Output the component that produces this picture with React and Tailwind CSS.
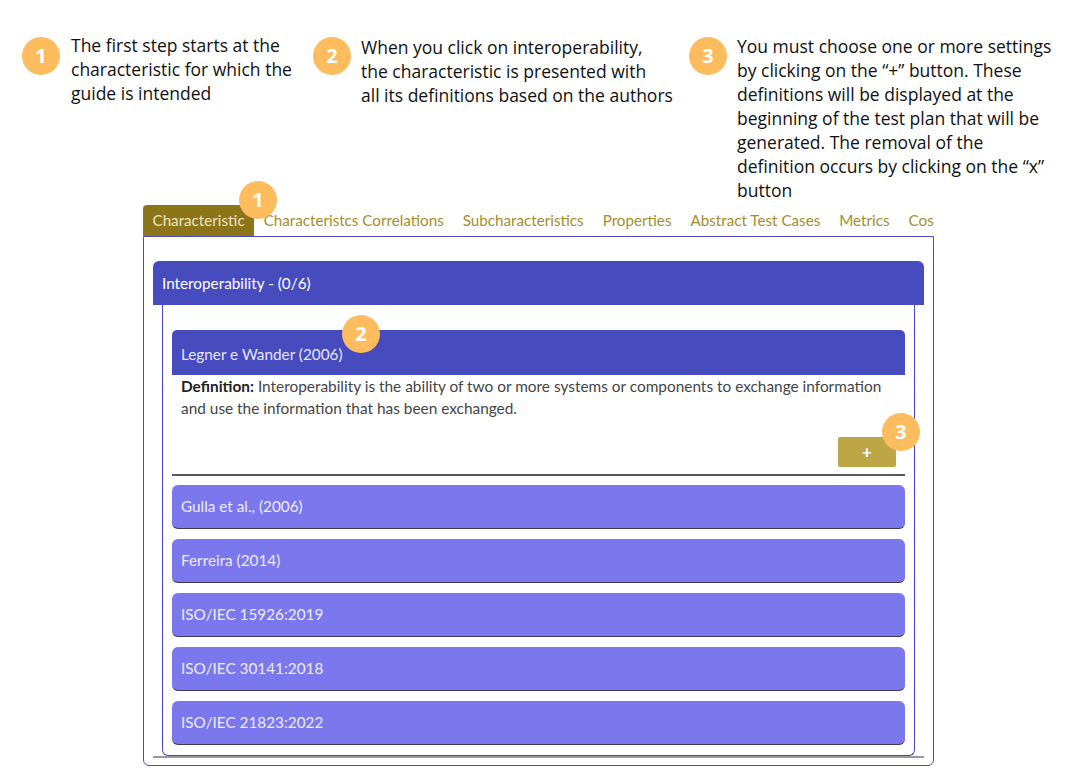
import React from 'react';

const UI_FONT = { fontFamily: 'Lato, "Open Sans", sans-serif' };
const NOTE_FONT = { fontFamily: '"Open Sans", "Noto Sans", sans-serif' };

// orange step marker used both in the notes and over the UI
function Badge({ n, className = '' }) {
  return (
    <div
      className={`w-[38px] h-[38px] rounded-full bg-[#fdbd5e] text-white text-[20px] font-bold flex items-center justify-center shrink-0 ${className}`}
      style={NOTE_FONT}
    >
      {n}
    </div>
  );
}

const tabs = [
  'Characteristic',
  'Characteristcs Correlations',
  'Subcharacteristics',
  'Properties',
  'Abstract Test Cases',
  'Metrics',
  'Cost',
];

const others = [
  'Gulla et al., (2006)',
  'Ferreira (2014)',
  'ISO/IEC 15926:2019',
  'ISO/IEC 30141:2018',
  'ISO/IEC 21823:2022',
];

function App() {
  return (
    <div className="bg-white w-[1081px] h-[770px] overflow-hidden relative">
      {/* explanatory notes */}
      <div className="flex items-start pt-[33px] text-[17.5px] leading-[24px] text-[#111]" style={NOTE_FONT}>
        <div className="flex items-start ml-[22px] w-[291px]">
          <Badge n="1" className="mt-[4px]" />
          <p className="ml-[11px]">
            The first step starts at the
            <br />
            characteristic for which the
            <br />
            guide is intended
          </p>
        </div>
        <div className="flex items-start w-[376px]">
          <Badge n="2" className="mt-[4px]" />
          <p className="ml-[10px] mt-[2px]">
            When you click on interoperability,
            <br />
            the characteristic is presented with
            <br />
            all its definitions based on the authors
          </p>
        </div>
        <div className="flex items-start">
          <Badge n="3" className="mt-[4px]" />
          <p className="ml-[10px] mt-[1px]">
            You must choose one or more settings
            <br />
            by clicking on the “+” button. These
            <br />
            definitions will be displayed at the
            <br />
            beginning of the test plan that will be
            <br />
            generated. The removal of the
            <br />
            definition occurs by clicking on the “x”
            <br />
            button
          </p>
        </div>
      </div>

      {/* screenshot of the tool */}
      <div className="ml-[143px] w-[791px] mt-[3px] relative" style={UI_FONT}>
        <div className="flex h-[31px] overflow-hidden whitespace-nowrap text-[15.2px]">
          {tabs.map((t, i) => (
            <div
              key={t}
              className={
                i === 0
                  ? 'px-[9.5px] flex items-center bg-[#8b7518] text-[#ece4c4] rounded-t-[4px]'
                  : 'px-[9.5px] flex items-center text-[#a58d2c]'
              }
            >
              {t}
            </div>
          ))}
        </div>
        <Badge n="1" className="absolute left-[96px] top-[-24px]" />

        <div className="border border-[#4d4dc6] rounded-b-[6px] px-[9px] pt-[24px] pb-[7px]">
          <div className="border-b-2 border-[#9a9a9a]">
            <div className="h-[44px] bg-[#464bbd] rounded-t-[6px] flex items-center px-[9px] text-white text-[15.3px]">
              Interoperability - (0/6)
            </div>
            <div className="mx-[9px] border-x border-b border-[#4646d0] rounded-b-[6px] px-[9px] pt-[25px] pb-[10px]">
              <div className="relative">
                <div className="h-[45px] bg-[#464bbd] rounded-t-[5px] flex items-center px-[9px] pt-[3px] text-[#e6e6ff] text-[15.3px]">
                  Legner e Wander (2006)
                </div>
                <Badge n="2" className="absolute left-[170px] top-[-15px]" />
                <p className="px-[9px] pr-[20px] text-[15.4px] leading-[22px] text-[#454545]">
                  <b className="text-[#222]">Definition:</b> Interoperability is the ability of two or more systems or
                  components to exchange information and use the information that has been exchanged.
                </p>
                <div className="flex justify-end mt-[18px] pr-[9px] relative">
                  <div className="w-[58px] h-[30px] bg-[#bca646] text-white text-[17px] font-bold flex items-center justify-center rounded-[2px]">
                    +
                  </div>
                  <Badge n="3" className="absolute right-[-15px] top-[-24px]" />
                </div>
                <div className="mt-[7px] border-b-2 border-[#5a5a5a]" />
              </div>

              <div className="flex flex-col gap-[10px] mt-[9px]">
                {others.map((o) => (
                  <div
                    key={o}
                    className="h-[44px] bg-[#7b78ee] rounded-[6px] border-b-[1.5px] border-[#3a3a5a] flex items-center px-[9px] text-[#ecebff] text-[15.3px]"
                  >
                    {o}
                  </div>
                ))}
              </div>
            </div>
          </div>
        </div>
      </div>
    </div>
  );
}

export default App;
